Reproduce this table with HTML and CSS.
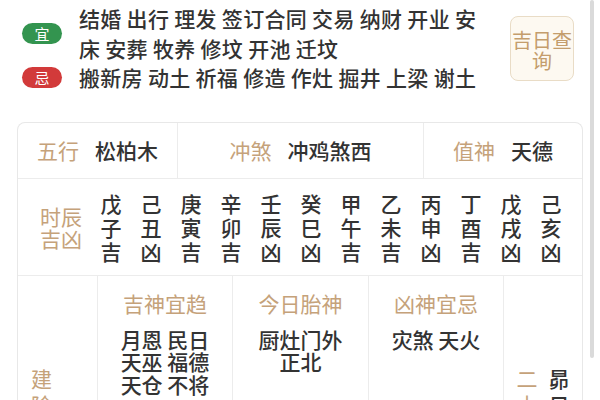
FILE: index.html
```html
<!DOCTYPE html>
<html lang="zh-CN">
<head>
<meta charset="utf-8">
<title>黄历</title>
<link rel="stylesheet" href="styles.css">
</head>
<body>
<div class="page">
  <div class="top">
    <div class="yiji">
      <div class="yj-row">
        <span class="badge yi">宜</span>
        <div class="yj-text">结婚 出行 理发 签订合同 交易 纳财 开业 安床 安葬 牧养 修坟 开池 迁坟</div>
      </div>
      <div class="yj-row">
        <span class="badge ji">忌</span>
        <div class="yj-text">搬新房 动土 祈福 修造 作灶 掘井 上梁 谢土</div>
      </div>
    </div>
    <div class="query">吉日查询</div>
  </div>

  <div class="card">
    <div class="info">
      <div class="cell"><span class="label">五行</span><span class="val">松柏木</span></div>
      <div class="cell"><span class="label">冲煞</span><span class="val">冲鸡煞西</span></div>
      <div class="cell"><span class="label">值神</span><span class="val">天德</span></div>
    </div>

    <div class="hours">
      <div class="hours-label">时辰<br>吉凶</div>
      <div class="hours-grid">
        <div class="hour">戊<br>子<br>吉</div>
        <div class="hour">己<br>丑<br>凶</div>
        <div class="hour">庚<br>寅<br>吉</div>
        <div class="hour">辛<br>卯<br>吉</div>
        <div class="hour">壬<br>辰<br>凶</div>
        <div class="hour">癸<br>巳<br>凶</div>
        <div class="hour">甲<br>午<br>吉</div>
        <div class="hour">乙<br>未<br>吉</div>
        <div class="hour">丙<br>申<br>凶</div>
        <div class="hour">丁<br>酉<br>吉</div>
        <div class="hour">戊<br>戌<br>凶</div>
        <div class="hour">己<br>亥<br>凶</div>
      </div>
    </div>

    <div class="gods">
      <div class="side">
        <div class="vt label">建除十二神</div>
        <div class="vt val late">除日</div>
      </div>
      <div class="god">
        <div class="god-title">吉神宜趋</div>
        <div class="god-list">
          <div>月恩 民日</div>
          <div>天巫 福德</div>
          <div>天仓 不将</div>
        </div>
      </div>
      <div class="god">
        <div class="god-title">今日胎神</div>
        <div class="god-list">
          <div>厨灶门外</div>
          <div>正北</div>
        </div>
      </div>
      <div class="god">
        <div class="god-title">凶神宜忌</div>
        <div class="god-list">
          <div>灾煞 天火</div>
        </div>
      </div>
      <div class="side">
        <div class="vt label">二十八星宿</div>
        <div class="vt val">昴日鸡</div>
      </div>
    </div>
  </div>

  <div class="scrollbar"></div>
</div>
</body>
</html>
```

FILE: styles.css
```css
html, body {
  margin: 0;
  padding: 0;
  overflow: hidden;
  background: #ffffff;
}

body {
  font-family: "Noto Sans CJK SC", "Noto Sans", sans-serif;
  font-weight: 500;
  color: #333333;
}

.page {
  position: relative;
  width: 600px;
  height: 400px;
  overflow: hidden;
}

/* top: 宜 / 忌 */
.top {
  display: flex;
  align-items: center;
  padding: 4px 0 0 22px;
  margin-bottom: 29px;
}

.yiji {
  display: flex;
  flex-direction: column;
}

.yj-row {
  display: flex;
  align-items: center;
  gap: 17px;
}

.badge {
  flex: none;
  width: 40px;
  height: 21px;
  border-radius: 11px;
  color: #ffffff;
  font-size: 15px;
  font-weight: 400;
  line-height: 21px;
  text-align: center;
}

.badge.yi { background: #33944f; }
.badge.ji { background: #d23a3a; }

.yj-text {
  width: 410px;
  font-size: 21px;
  letter-spacing: 0.3px;
  line-height: 29.5px;
  color: #333333;
}

.query {
  flex: none;
  margin-left: 21px;
  width: 64px;
  height: 65px;
  box-sizing: border-box;
  border: 1px solid #e9dcc6;
  border-radius: 8px;
  background: #fdf9f1;
  color: #c49d6c;
  font-size: 20px;
  font-weight: 400;
  line-height: 21px;
  text-align: center;
  display: flex;
  align-items: center;
  justify-content: center;
  padding-top: 3px;
}

/* card */
.card {
  margin-left: 17px;
  width: 566px;
  box-sizing: border-box;
  border: 1px solid #e8e8e8;
  border-bottom: none;
  border-radius: 8px 8px 0 0;
}

.label { color: #c5a27a; font-weight: 400; }
.val { color: #333333; }

.info {
  display: grid;
  grid-template-columns: 159px 246px 1fr;
  height: 55px;
  border-bottom: 1px solid #ececec;
}

.info .cell {
  display: flex;
  align-items: center;
  justify-content: center;
  gap: 16px;
  font-size: 21px;
}

.info .cell + .cell { border-left: 1px solid #ececec; }

.hours {
  display: flex;
  align-items: center;
  height: 96px;
  padding-left: 22px;
  border-bottom: 1px solid #ececec;
}

.hours-label {
  width: 42px;
  margin-right: 9px;
  font-size: 21px;
  font-weight: 400;
  line-height: 22px;
  color: #c5a27a;
}

.hours-grid {
  display: grid;
  grid-template-columns: repeat(12, 40px);
  font-size: 21px;
  line-height: 24px;
  text-align: center;
}

.gods {
  display: grid;
  grid-template-columns: 79px 135px 136px 135px 1fr;
  height: 140px;
}

.gods > * + * { border-left: 1px solid #ececec; }

.god {
  text-align: center;
  padding-top: 15px;
}

.god-title {
  font-size: 21px;
  font-weight: 400;
  line-height: 24px;
  color: #c5a27a;
  margin-bottom: 13px;
}

.god-list {
  font-size: 21px;
  line-height: 22.5px;
  color: #333333;
}

.side {
  display: flex;
  justify-content: center;
  align-items: flex-start;
  gap: 11px;
  padding-top: 89px;
}

.vt {
  width: 21px;
  font-size: 21px;
  line-height: 26px;
  text-align: center;
}

.vt.late { margin-top: 38px; }

.scrollbar {
  position: absolute;
  left: 590px;
  top: 0;
  width: 4px;
  height: 358px;
  border-radius: 2px;
  background: #dadada;
}
```
